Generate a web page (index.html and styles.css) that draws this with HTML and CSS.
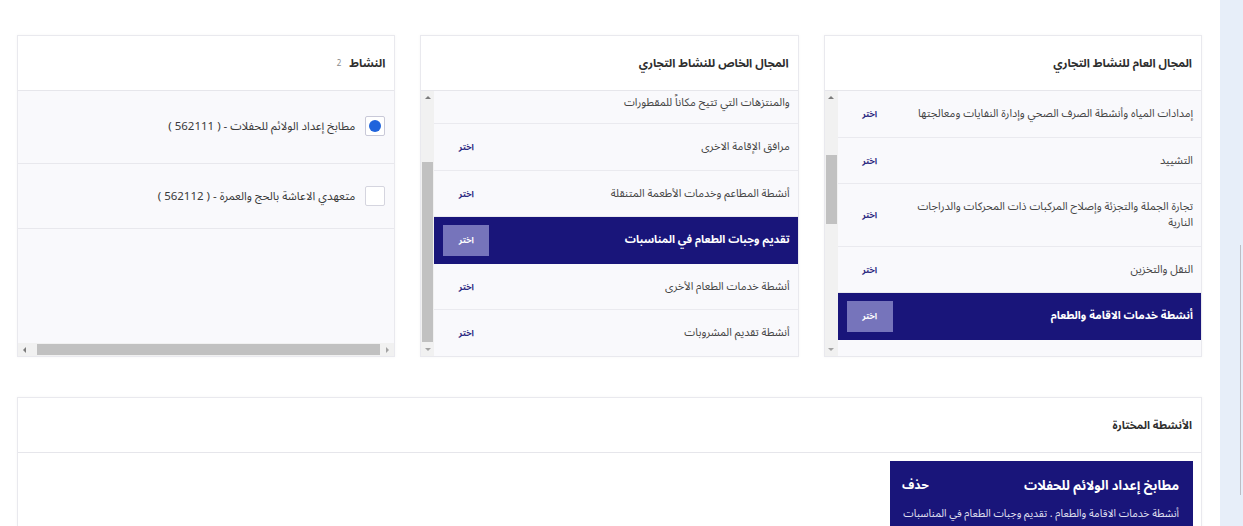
FILE: index.html
```html
<!DOCTYPE html>
<html lang="ar">
<head>
<meta charset="utf-8">
<title>الأنشطة</title>
<link rel="stylesheet" href="styles.css">
</head>
<body>
<div class="page">
  <main class="content" dir="rtl">
    <section class="pickers">
      <div class="panel">
        <div class="panel-head">المجال العام للنشاط التجاري</div>
        <div class="panel-body">
          <div class="list">
            <div class="row"><span class="row-text">إمدادات المياه وأنشطة الصرف الصحي وإدارة النفايات ومعالجتها</span><span class="pick">اختر</span></div>
            <div class="row"><span class="row-text">التشييد</span><span class="pick">اختر</span></div>
            <div class="row"><span class="row-text">تجارة الجملة والتجزئة وإصلاح المركبات ذات المحركات والدراجات<br>النارية</span><span class="pick">اختر</span></div>
            <div class="row"><span class="row-text">النقل والتخزين</span><span class="pick">اختر</span></div>
            <div class="row selected"><span class="row-text">أنشطة خدمات الاقامة والطعام</span><span class="pick">اختر</span></div>
          </div>
          <div class="vscroll">
            <span class="arrow up"></span>
            <div class="track"><div class="thumb thumb-general"></div></div>
            <span class="arrow down"></span>
          </div>
        </div>
      </div>

      <div class="panel">
        <div class="panel-head">المجال الخاص للنشاط التجاري</div>
        <div class="panel-body">
          <div class="list">
            <div class="row partial"><span class="row-text">والمنتزهات التي تتيح مكاناً للمقطورات</span></div>
            <div class="row"><span class="row-text">مرافق الإقامة الاخرى</span><span class="pick">اختر</span></div>
            <div class="row"><span class="row-text">أنشطة المطاعم وخدمات الأطعمة المتنقلة</span><span class="pick">اختر</span></div>
            <div class="row selected"><span class="row-text">تقديم وجبات الطعام في المناسبات</span><span class="pick">اختر</span></div>
            <div class="row"><span class="row-text">أنشطة خدمات الطعام الأخرى</span><span class="pick">اختر</span></div>
            <div class="row"><span class="row-text">أنشطة تقديم المشروبات</span><span class="pick">اختر</span></div>
          </div>
          <div class="vscroll">
            <span class="arrow up"></span>
            <div class="track"><div class="thumb thumb-special"></div></div>
            <span class="arrow down"></span>
          </div>
        </div>
      </div>

      <div class="panel">
        <div class="panel-head">النشاط <sup class="count">2</sup></div>
        <div class="panel-body column">
          <div class="check-list">
            <label class="check-row first">
              <span class="box checked"><span class="dot"></span></span>
              <span class="check-text">مطابخ إعداد الولائم للحفلات - ( 562111 )</span>
            </label>
            <label class="check-row">
              <span class="box"></span>
              <span class="check-text">متعهدي الاعاشة بالحج والعمرة - ( 562112 )</span>
            </label>
          </div>
          <div class="hscroll">
            <span class="harrow right"></span>
            <div class="htrack"><div class="hthumb"></div></div>
            <span class="harrow left"></span>
          </div>
        </div>
      </div>
    </section>

    <section class="panel chosen">
      <div class="panel-head">الأنشطة المختارة</div>
      <div class="chosen-body">
        <div class="chosen-card">
          <div class="chosen-title"><span>مطابخ إعداد الولائم للحفلات</span><span class="remove">حذف</span></div>
          <div class="chosen-sub">أنشطة خدمات الاقامة والطعام . تقديم وجبات الطعام في المناسبات</div>
        </div>
      </div>
    </section>
  </main>
  <aside class="side-strip"><span class="side-bar"></span></aside>
</div>
</body>
</html>
```

FILE: styles.css
```css
* { box-sizing: border-box; }
html, body {
  margin: 0;
  padding: 0;
  height: 526px;
  overflow: hidden;
  background: #ffffff;
  font-family: "Noto Sans Arabic", "Noto Sans", "DejaVu Sans", sans-serif;
  color: #3b3b3b;
}
.page {
  display: flex;
  height: 526px;
}
.content {
  width: 1220px;
  padding: 35px 18px 0 17px;
}
.side-strip {
  flex: 1;
  background: #e7eef9;
  display: flex;
  justify-content: flex-end;
  padding: 245px 2px 0 0;
}
.side-bar {
  width: 1px;
  height: 250px;
  background: #bdbdc4;
}

.pickers {
  display: grid;
  grid-template-columns: repeat(3, 1fr);
  gap: 25px;
  height: 322px;
}
.panel {
  background: #fff;
  border: 1px solid #e9e9ee;
  box-shadow: 0 0 3px rgba(0, 0, 0, 0.04);
  display: flex;
  flex-direction: column;
  overflow: hidden;
}
.panel-head {
  height: 55px;
  flex: none;
  display: flex;
  align-items: center;
  padding: 0 9px;
  font-size: 11.5px;
  font-weight: bold;
  color: #2e2e2e;
  border-bottom: 1px solid #e6e6eb;
}
.count {
  font-size: 8px;
  color: #8a8a8a;
  font-weight: normal;
  margin-right: 8px;
  vertical-align: middle;
}
.panel-body {
  flex: 1;
  display: flex;
  min-height: 0;
  background: #f9f9fc;
}
.panel-body.column { flex-direction: column; }

.list {
  flex: 1;
  overflow: hidden;
}
.row {
  display: flex;
  align-items: center;
  justify-content: space-between;
  gap: 20px;
  padding: 15px 8px 14.5px 9px;
  background: #f9f9fc;
  border-bottom: 1px solid #eaeaef;
}
.row.partial { padding-top: 4px; padding-bottom: 12px; }
.row-text {
  font-size: 11px;
  line-height: 16px;
  color: #454545;
}
.pick {
  flex: none;
  width: 46px;
  height: 31px;
  margin: -7.5px 0;
  display: flex;
  align-items: center;
  justify-content: center;
  font-size: 8.5px;
  font-weight: bold;
  color: #2a2780;
}
.row.selected {
  background: #19157a;
  border-bottom-color: #19157a;
}
.row.selected .row-text {
  color: #fff;
  font-weight: bold;
  font-size: 11px;
}
.row.selected .pick {
  background: #7674bb;
  color: #fff;
}

.vscroll {
  width: 13px;
  flex: none;
  background: #f1f1f1;
  display: flex;
  flex-direction: column;
  align-items: center;
}
.arrow {
  width: 13px;
  height: 13px;
  flex: none;
  display: flex;
  align-items: center;
  justify-content: center;
}
.arrow::before {
  content: "";
  border-left: 3px solid transparent;
  border-right: 3px solid transparent;
}
.arrow.up::before { border-bottom: 3px solid #7c7c7c; }
.arrow.down::before { border-top: 3px solid #a3a3a3; }
.track {
  flex: 1;
  width: 100%;
  display: flex;
  flex-direction: column;
  align-items: center;
}
.thumb {
  width: 11px;
  background: #c1c1c1;
}
.thumb-general { margin-top: 51px; height: 69px; }
.thumb-special { margin-top: 58px; height: 180px; }

.check-list { flex: 1; }
.check-row {
  display: flex;
  align-items: center;
  gap: 10px;
  padding: 22px 9px;
  border-bottom: 1px solid #e8e8ed;
}
.check-row.first { padding: 25px 9px 27px; }
.box {
  width: 20px;
  height: 20px;
  flex: none;
  background: #fff;
  border: 1px solid #d5d5df;
  border-radius: 2px;
  display: flex;
  align-items: center;
  justify-content: center;
}
.box.checked { border-color: #c9c9d8; }
.dot {
  width: 12px;
  height: 12px;
  border-radius: 50%;
  background: #1f63dc;
}
.check-text {
  font-size: 11.5px;
  line-height: 16px;
  color: #3a3a3a;
}
.hscroll {
  height: 13px;
  flex: none;
  background: #f1f1f1;
  display: flex;
  align-items: center;
}
.harrow {
  width: 13px;
  height: 13px;
  flex: none;
  display: flex;
  align-items: center;
  justify-content: center;
}
.harrow::before {
  content: "";
  border-top: 3px solid transparent;
  border-bottom: 3px solid transparent;
}
.harrow.right::before { border-left: 3px solid #a3a3a3; }
.harrow.left::before { border-right: 3px solid #7c7c7c; }
.htrack {
  flex: 1;
  height: 100%;
  display: flex;
  align-items: center;
}
.hthumb {
  height: 11px;
  background: #c1c1c1;
  margin-right: 1px;
  width: 343px;
}

.chosen {
  margin-top: 40px;
  height: 200px;
}
.chosen .panel-head { font-size: 11px; }
.chosen-body {
  padding: 8px 8px 0;
}
.chosen-card {
  width: 303px;
  background: #19157a;
  color: #fff;
  padding: 15px 14px 14px 12px;
}
.chosen-title {
  display: flex;
  justify-content: space-between;
  align-items: center;
  font-size: 13px;
  font-weight: bold;
  line-height: 20px;
}
.remove { font-size: 12px; }
.chosen-sub {
  margin-top: 10px;
  font-size: 10.5px;
  line-height: 16px;
  color: #e2e2f2;
}
```
